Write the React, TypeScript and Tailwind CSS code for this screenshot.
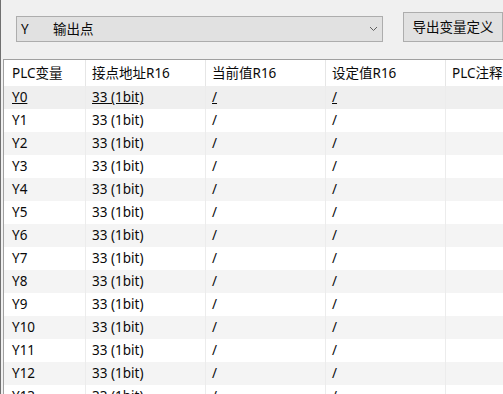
import React from "react";

const FONT = { fontFamily: '"Noto Sans", "Noto Sans CJK SC", sans-serif' };

const rows = Array.from({ length: 14 }, (_, i) => `Y${i}`);

function Chevron() {
  return (
    <svg width="9" height="6" viewBox="0 0 9 6" className="text-[#606060]">
      <path d="M1 1 L4.5 4.5 L8 1" fill="none" stroke="currentColor" strokeWidth="1" />
    </svg>
  );
}

export default function App() {
  return (
    <div
      className="w-[503px] h-[394px] overflow-hidden bg-[#f0f0f0] border-l border-[#707070] text-[13.5px] text-[#0a0a0a]"
      style={FONT}
    >
      {/* toolbar */}
      <div className="flex items-end h-[59px] pb-[17px] pl-[15px]">
        <div className="flex items-center w-[367px] h-[26px] border border-[#adadad] bg-[#e1e1e1] pl-[4px] pr-[4px]">
          <span className="w-[32px]">Y</span>
          <span className="flex-1">输出点</span>
          <Chevron />
        </div>
        <button className="ml-[20px] w-[100px] h-[30px] shrink-0 border border-[#adadad] bg-[#e1e1e1] flex items-center justify-center">
          导出变量定义
        </button>
      </div>

      {/* table */}
      <div className="ml-[2px] border-l border-t border-[#a0a0a0] bg-white h-full">
        <div className="flex h-[26px] items-center">
          <div className="w-[82px] shrink-0 pl-[8px] h-full flex items-center border-r border-[#e6e6e6]">PLC变量</div>
          <div className="w-[120px] shrink-0 pl-[6px] h-full flex items-center border-r border-[#e6e6e6]">接点地址R16</div>
          <div className="w-[120px] shrink-0 pl-[6px] h-full flex items-center border-r border-[#e6e6e6]">当前值R16</div>
          <div className="w-[120px] shrink-0 pl-[6px] h-full flex items-center border-r border-[#e6e6e6]">设定值R16</div>
          <div className="w-[120px] shrink-0 pl-[6px] h-full flex items-center whitespace-nowrap">PLC注释</div>
        </div>
        {rows.map((r, i) => {
          const bg = i === 0 ? "bg-[#efefef]" : i % 2 === 0 ? "bg-[#f4f4f4]" : "bg-white";
          const u = i === 0 ? "underline" : "";
          return (
            <div key={r} className={`flex h-[23px] items-center ${bg}`}>
              <div className="w-[82px] shrink-0 pl-[8px] h-full flex items-center border-r border-[#ececec]">
                <span className={u}>{r}</span>
              </div>
              <div className="w-[120px] shrink-0 pl-[6px] h-full flex items-center border-r border-[#ececec]">
                <span className={u}>33 (1bit)</span>
              </div>
              <div className="w-[120px] shrink-0 pl-[6px] h-full flex items-center border-r border-[#ececec]">
                <span className={u}>/</span>
              </div>
              <div className="w-[120px] shrink-0 pl-[6px] h-full flex items-center border-r border-[#ececec]">
                <span className={u}>/</span>
              </div>
              <div className="w-[120px] shrink-0 h-full" />
            </div>
          );
        })}
      </div>
    </div>
  );
}
